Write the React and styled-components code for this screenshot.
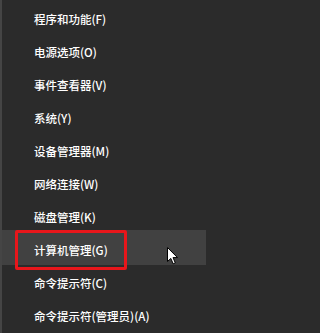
import React from 'react';
import styled, { createGlobalStyle } from 'styled-components';

const GlobalStyle = createGlobalStyle`
  html, body {
    margin: 0;
    padding: 0;
    background: #2b2b2b;
  }
`;

const items = [
  '程序和功能(F)',
  '电源选项(O)',
  '事件查看器(V)',
  '系统(Y)',
  '设备管理器(M)',
  '网络连接(W)',
  '磁盘管理(K)',
  '计算机管理(G)',
  '命令提示符(C)',
  '命令提示符(管理员)(A)',
];

const Menu = styled.div`
  width: 204px;
  height: 333px;
  display: flex;
  flex-direction: column;
  background: #2b2b2b;
  border-left: 2px solid #454545;
  overflow: hidden;
`;

const Row = styled.div`
  position: relative;
  box-sizing: border-box;
  display: flex;
  align-items: center;
  padding: 4px 0 0 32px;
  background: ${(p) => (p.$active ? '#414141' : 'transparent')};
  margin: ${(p) => (p.$active ? '-1px 0' : '0')};
  height: ${(p) => (p.$active ? '35px' : '33px')};
  flex-shrink: 0;
`;

const Label = styled.span`
  color: #ffffff;
  font-family: "Noto Sans CJK SC", "Noto Sans", sans-serif;
  font-size: 11.5px;
  font-weight: 500;
  white-space: nowrap;
`;

const Mark = styled.div`
  position: absolute;
  left: 13px;
  top: 0;
  width: 112px;
  height: 40px;
  box-sizing: border-box;
  border: 3px solid #e8161b;
  border-radius: 2px;
`;

const Cursor = styled.svg`
  position: absolute;
  left: 165px;
  top: 17px;
`;

export default function App() {
  return (
    <>
      <GlobalStyle />
      <Menu>
        {items.map((label, i) => (
          <Row key={label} $active={i === 7}>
            <Label>{label}</Label>
            {i === 7 && <Mark />}
            {i === 7 && (
              <Cursor width="12" height="18" viewBox="0 0 12 18">
                <path
                  d="M0.5 0.5 L0.5 14.5 L3.8 11.4 L6.2 16.8 L8.3 15.9 L6 10.6 L10.5 10.6 Z"
                  fill="#fff"
                  stroke="#000"
                  strokeWidth="1"
                  strokeLinejoin="round"
                />
              </Cursor>
            )}
          </Row>
        ))}
      </Menu>
    </>
  );
}
